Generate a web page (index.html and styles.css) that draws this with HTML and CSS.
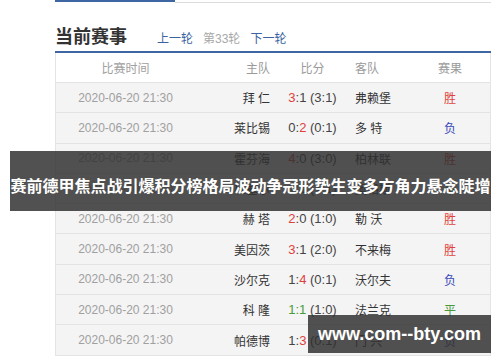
FILE: index.html
```html
<!DOCTYPE html>
<html lang="zh">
<head>
<meta charset="utf-8">
<link rel="stylesheet" href="styles.css">
</head>
<body>
<div class="page">
  <div class="topbar"><span class="topbar-active"></span><span class="topbar-rest"></span></div>
  <div class="head">
    <h2 class="title">当前赛事</h2>
    <nav class="rounds">
      <a class="round-link">上一轮</a>
      <span class="round-cur">第33轮</span>
      <a class="round-link">下一轮</a>
    </nav>
  </div>
  <div class="table">
    <div class="row row-head">
      <div class="c-time">比赛时间</div>
      <div class="c-home">主队</div>
      <div class="c-score">比分</div>
      <div class="c-away">客队</div>
      <div class="c-res">赛果</div>
    </div>
    <div class="row">
      <div class="c-time">2020-06-20 21:30</div>
      <div class="c-home">拜 仁</div>
      <div class="c-score"><span class="hl-red">3</span>:1 (3:1)</div>
      <div class="c-away">弗赖堡</div>
      <div class="c-res win">胜</div>
    </div>
    <div class="row">
      <div class="c-time">2020-06-20 21:30</div>
      <div class="c-home">莱比锡</div>
      <div class="c-score">0:<span class="hl-red">2</span> (0:1)</div>
      <div class="c-away">多 特</div>
      <div class="c-res lose">负</div>
    </div>
    <div class="row">
      <div class="c-time">2020-06-20 21:30</div>
      <div class="c-home">霍芬海</div>
      <div class="c-score"><span class="hl-red">4</span>:0 (3:0)</div>
      <div class="c-away">柏林联</div>
      <div class="c-res win">胜</div>
    </div>
    <div class="row">
      <div class="c-time">2020-06-20 21:30</div>
      <div class="c-home">杜塞尔</div>
      <div class="c-score"><span class="hl-green">1:1</span> (1:1)</div>
      <div class="c-away">奥格斯</div>
      <div class="c-res draw">平</div>
    </div>
    <div class="row">
      <div class="c-time">2020-06-20 21:30</div>
      <div class="c-home">赫 塔</div>
      <div class="c-score"><span class="hl-red">2</span>:0 (1:0)</div>
      <div class="c-away">勒 沃</div>
      <div class="c-res win">胜</div>
    </div>
    <div class="row">
      <div class="c-time">2020-06-20 21:30</div>
      <div class="c-home">美因茨</div>
      <div class="c-score"><span class="hl-red">3</span>:1 (2:0)</div>
      <div class="c-away">不来梅</div>
      <div class="c-res win">胜</div>
    </div>
    <div class="row">
      <div class="c-time">2020-06-20 21:30</div>
      <div class="c-home">沙尔克</div>
      <div class="c-score">1:<span class="hl-red">4</span> (0:1)</div>
      <div class="c-away">沃尔夫</div>
      <div class="c-res lose">负</div>
    </div>
    <div class="row">
      <div class="c-time">2020-06-20 21:30</div>
      <div class="c-home">科 隆</div>
      <div class="c-score"><span class="hl-green">1:1</span> (1:0)</div>
      <div class="c-away">法兰克</div>
      <div class="c-res draw">平</div>
    </div>
    <div class="row">
      <div class="c-time">2020-06-20 21:30</div>
      <div class="c-home">帕德博</div>
      <div class="c-score">1:<span class="hl-red">3</span> (0:1)</div>
      <div class="c-away">门 兴</div>
      <div class="c-res lose">负</div>
    </div>
  </div>
</div>
<div class="banner">赛前德甲焦点战引爆积分榜格局波动争冠形势生变多方角力悬念陡增</div>
<div class="watermark">www.com--bty.com</div>
</body>
</html>
```

FILE: styles.css
```css
* { box-sizing: border-box; }
html, body { margin: 0; padding: 0; }
body {
  width: 500px;
  height: 362px;
  overflow: hidden;
  background: #fff;
  font-family: "Liberation Sans", "Noto Sans CJK SC", sans-serif;
  color: #333;
  position: relative;
}
.page {
  margin-left: 55px;
  width: 436px;
}
.topbar {
  display: flex;
  height: 3px;
}
.topbar-active {
  width: 120px;
  height: 2px;
  background: #3d66a2;
}
.topbar-rest {
  flex: 1;
  border-bottom: 1px solid #dcdcdc;
}
.head {
  display: flex;
  align-items: baseline;
  height: 50px;
  padding-top: 22px;
  border-bottom: 2px solid #3d66a2;
}
.title {
  margin: 0;
  font-size: 18px;
  line-height: 24px;
  font-weight: bold;
  color: #333;
}
.rounds {
  display: flex;
  gap: 10px;
  margin-left: 30px;
  font-size: 12px;
}
.round-link { color: #3a63a0; }
.round-cur { color: #a8a8a8; }
.table {
  border-left: 1px solid #e4e4e4;
  border-right: 1px solid #e4e4e4;
}
.row {
  display: grid;
  grid-template-columns: 139px 85px 65px 65px 80px;
  align-items: center;
  height: 30.3px;
  background: #f4f4f4;
  border-bottom: 1px solid #e3e3e3;
  font-size: 12px;
  color: #333;
}
.row-head {
  height: 30px;
  background: #fff;
  color: #9a9a9a;
}
.c-time { text-align: center; }
.row .c-time { color: #a0a0a0; }
.c-home { text-align: right; padding-right: 10px; }
.c-score { text-align: center; font-size: 13px; color: #444; }
.row-head .c-score { font-size: 12px; color: #9a9a9a; }
.c-away { text-align: left; padding-left: 10px; }
.c-res { text-align: center; }
.hl-red { color: #e0403c; }
.hl-green { color: #4a9a3c; }
.win { color: #e0403c; }
.lose { color: #3a48b8; }
.draw { color: #4a9a3c; }
.banner {
  position: absolute;
  left: 10px;
  top: 151px;
  width: 481px;
  height: 60px;
  padding-top: 7px;
  background: rgba(48, 48, 48, 0.84);
  color: #fff;
  font-family: "Noto Sans CJK SC", sans-serif;
  font-weight: bold;
  font-size: 16px;
  display: flex;
  align-items: center;
  justify-content: center;
  white-space: nowrap;
}
.watermark {
  position: absolute;
  left: 308px;
  top: 315px;
  width: 183px;
  height: 38px;
  background: rgba(48, 48, 48, 0.84);
  color: #fff;
  font-family: "Liberation Sans", sans-serif;
  font-weight: bold;
  font-size: 18px;
  display: flex;
  align-items: center;
  justify-content: center;
}
```
